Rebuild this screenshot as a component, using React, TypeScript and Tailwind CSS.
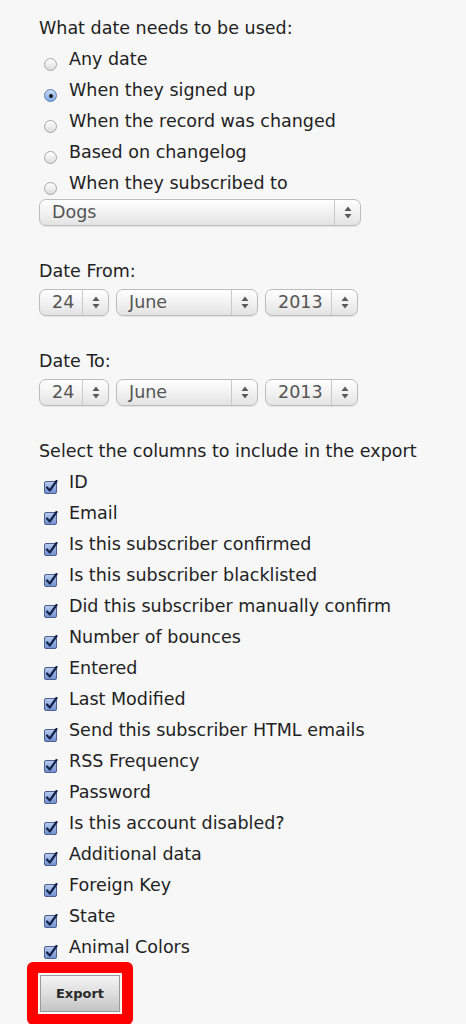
import React from "react";

const font = { fontFamily: '"DejaVu Sans", "Liberation Sans", sans-serif' };

function Arrows() {
  return (
    <svg width="8" height="13" viewBox="0 0 8 13">
      <polygon points="0.5,5 4,0.5 7.5,5" fill="#5a5a5a" />
      <polygon points="0.5,8 4,12.5 7.5,8" fill="#5a5a5a" />
    </svg>
  );
}

function Sel({ value, className }: { value: string; className: string }) {
  return (
    <div
      className={
        "flex h-[27px] items-stretch rounded-[7px] border border-[#bcbcbc] bg-[linear-gradient(to_bottom,#ffffff,#f3f3f3_45%,#e3e3e3)] shadow-[0_1px_1px_rgba(0,0,0,0.08)] " +
        className
      }
    >
      <div className="flex-1 pl-[12px] text-[17.5px] leading-[25px] text-[#555]">{value}</div>
      <div className="flex w-[26px] items-center justify-center border-l border-[#c9c9c9]">
        <Arrows />
      </div>
    </div>
  );
}

function Radio({ checked, label }: { checked?: boolean; label: string }) {
  return (
    <div className="flex h-[31px] items-center">
      <div className="ml-[5px] mt-[10px] flex h-[13px] w-[13px] shrink-0 items-center justify-center">
        {checked ? (
          <div className="flex h-[13px] w-[13px] items-center justify-center rounded-full border border-[#5b7fb5] bg-[linear-gradient(to_bottom,#c8dcf8,#7fa9ea)]">
            <div className="h-[4px] w-[4px] rounded-full bg-[#1c1c1c]" />
          </div>
        ) : (
          <div className="h-[13px] w-[13px] rounded-full border border-[#a8a8a8] bg-[linear-gradient(to_bottom,#ffffff,#dcdcdc)]" />
        )}
      </div>
      <span className="ml-[12px]">{label}</span>
    </div>
  );
}

function Check({ label }: { label: string }) {
  return (
    <div className="flex h-[31px] items-center">
      <div className="ml-[5px] mt-[9px] shrink-0">
        <svg width="14" height="14" viewBox="0 0 14 14">
          <defs>
            <linearGradient id="cbg" x1="0" y1="0" x2="0" y2="1">
              <stop offset="0" stopColor="#b9cdf0" />
              <stop offset="1" stopColor="#6f8fd0" />
            </linearGradient>
          </defs>
          <rect x="0.5" y="1.5" width="12" height="12" rx="1.5" fill="url(#cbg)" stroke="#4d5f8c" />
          <path d="M3 7.5 L5.8 10.5 L12.5 1" fill="none" stroke="#15234a" strokeWidth="2.2" strokeLinecap="round" strokeLinejoin="round" />
        </svg>
      </div>
      <span className="ml-[11px]">{label}</span>
    </div>
  );
}

const columns = [
  "ID",
  "Email",
  "Is this subscriber confirmed",
  "Is this subscriber blacklisted",
  "Did this subscriber manually confirm",
  "Number of bounces",
  "Entered",
  "Last Modified",
  "Send this subscriber HTML emails",
  "RSS Frequency",
  "Password",
  "Is this account disabled?",
  "Additional data",
  "Foreign Key",
  "State",
  "Animal Colors",
];

export default function App() {
  return (
    <div className="min-h-[1024px] w-[466px] overflow-hidden bg-[#f7f7f7] text-[17.5px] text-[#222]" style={font}>
      <div className="flex flex-col pl-[39px] pt-[13px]">
        <div className="flex h-[31px] items-center">What date needs to be used:</div>
        <Radio label="Any date" />
        <Radio checked label="When they signed up" />
        <Radio label="When the record was changed" />
        <Radio label="Based on changelog" />
        <Radio label="When they subscribed to" />
        <Sel value="Dogs" className="w-[322px]" />

        <div className="mt-[30px] flex h-[31px] items-center">Date From:</div>
        <div className="mt-[2px] flex gap-[7px]">
          <Sel value="24" className="w-[70px]" />
          <Sel value="June" className="w-[142px]" />
          <Sel value="2013" className="w-[93px]" />
        </div>

        <div className="mt-[30px] flex h-[31px] items-center">Date To:</div>
        <div className="mt-[2px] flex gap-[7px]">
          <Sel value="24" className="w-[70px]" />
          <Sel value="June" className="w-[142px]" />
          <Sel value="2013" className="w-[93px]" />
        </div>

        <div className="mt-[30px] flex h-[31px] items-center">Select the columns to include in the export</div>
        <div className="flex flex-col gap-[0px]">
          {columns.map((c) => (
            <Check key={c} label={c} />
          ))}
        </div>

        <div className="-ml-[12px] -mt-[1px] w-[106px] rounded-[6px] border-[11px] border-[#ff0000] p-[2px]">
          <div className="flex h-[37px] w-[80px] items-center justify-center border border-[#9a9a9a] bg-[linear-gradient(to_bottom,#f4f4f4,#d9d9d9_60%,#c4c4c4)] text-[13px] font-bold text-[#2a2a2a]">
            Export
          </div>
        </div>
      </div>
    </div>
  );
}
